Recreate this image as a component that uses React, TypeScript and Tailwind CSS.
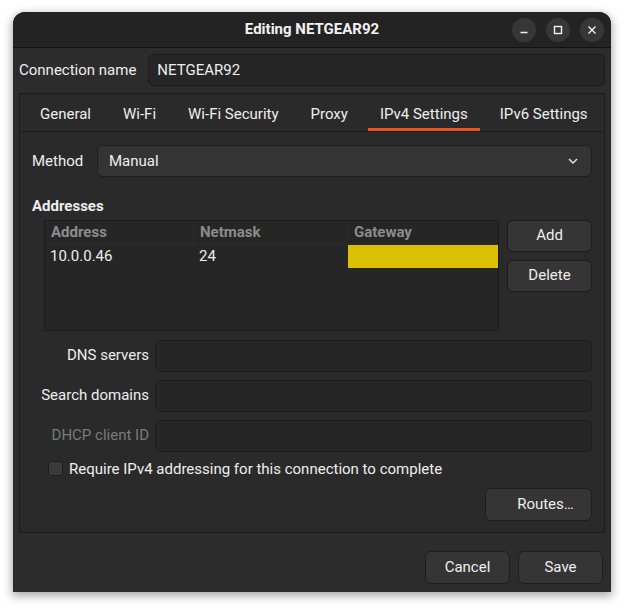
import type { ReactNode } from 'react';

const font = { fontFamily: 'Roboto, "Noto Sans", sans-serif' };

const tabs = ['General', 'Wi-Fi', 'Wi-Fi Security', 'Proxy', 'IPv4 Settings', 'IPv6 Settings'];

function WinButton({ children }: { children: ReactNode }) {
  return (
    <div className="w-[24px] h-[24px] rounded-full bg-[#373737] flex items-center justify-center">
      <svg width="16" height="16" viewBox="0 0 16 16" fill="none" stroke="#f2f2f2" strokeWidth="1.4">
        {children}
      </svg>
    </div>
  );
}

function Button({ label, className = '' }: { label: string; className?: string }) {
  return (
    <div
      className={`flex items-center justify-center rounded-[6px] bg-[#353535] border border-[#1e1e1e] text-[15px] text-[#eeeeee] ${className}`}
    >
      {label}
    </div>
  );
}

function Entry({ value = '', className = '' }: { value?: string; className?: string }) {
  return (
    <div
      className={`flex items-center h-[32px] rounded-[6px] bg-[#262626] border border-[#1c1c1c] px-[8px] text-[15px] text-[#eeeeee] ${className}`}
    >
      {value}
    </div>
  );
}

function FieldRow({ label, dim = false }: { label: string; dim?: boolean }) {
  return (
    <div className="flex items-center gap-[6px]">
      <div className={`w-[117px] text-right text-[15px] ${dim ? 'text-[#7a7a7a]' : 'text-[#eeeeee]'}`}>{label}</div>
      <Entry className="flex-1" />
    </div>
  );
}

export default function App() {
  return (
    <div className="w-[624px] h-[608px] bg-white pt-[12px] pl-[13px]" style={font}>
      <div className="w-[598px] h-[580px] rounded-t-[12px] bg-[#2c2c2c] flex flex-col overflow-hidden shadow-[0_3px_10px_1px_rgba(0,0,0,0.35)]">
        {/* Header bar */}
        <div className="relative h-[36px] shrink-0 bg-[#232323] border-b border-[#121212] flex items-center justify-center">
          <span className="text-[15px] font-bold text-[#f2f2f2]">Editing NETGEAR92</span>
          <div className="absolute right-[7px] top-[6px] flex gap-[10px]">
            <WinButton>
              <path d="M4.5 10.5h7" />
            </WinButton>
            <WinButton>
              <rect x="4.5" y="4.5" width="7" height="7" />
            </WinButton>
            <WinButton>
              <path d="M4.5 4.5l7 7M11.5 4.5l-7 7" />
            </WinButton>
          </div>
        </div>

        <div className="flex flex-col px-[6px] pt-[6px]">
          {/* Connection name */}
          <div className="flex items-center gap-[12px]">
            <span className="text-[15px] text-[#eeeeee]">Connection name</span>
            <Entry value="NETGEAR92" className="flex-1" />
          </div>

          {/* Notebook */}
          <div className="mt-[7px] h-[440px] border border-[#1b1b1b] bg-[#2a2a2a] flex flex-col">
            <div className="h-[38px] shrink-0 border-b border-[#1b1b1b] flex pl-[4px]">
              {tabs.map((t) => (
                <div
                  key={t}
                  className="relative flex items-center justify-center pt-[3px] px-[16px] text-[15px] text-[#eeeeee] whitespace-nowrap"
                >
                  {t}
                  {t === 'IPv4 Settings' && (
                    <div className="absolute left-[4px] right-[4px] bottom-0 h-[3px] bg-[#e95420]" />
                  )}
                </div>
              ))}
            </div>

            <div className="flex flex-col pl-[12px] pr-[12px] pt-[13px]">
              {/* Method */}
              <div className="flex items-center gap-[12px]">
                <span className="text-[15px] text-[#eeeeee] w-[53px]">Method</span>
                <div className="flex-1 h-[32px] rounded-[6px] bg-[#343434] border border-[#1e1e1e] flex items-center justify-between pl-[11px] pr-[12px] text-[15px] text-[#eeeeee]">
                  Manual
                  <svg width="12" height="8" viewBox="0 0 12 8" fill="none" stroke="#e6e6e6" strokeWidth="1.4">
                    <path d="M2 2l4 4 4-4" />
                  </svg>
                </div>
              </div>

              <div className="mt-[18px] text-[15px] font-bold text-[#eeeeee]">Addresses</div>

              {/* Addresses table + buttons */}
              <div className="mt-[2px] flex gap-[8px] pl-[12px]">
                <div className="w-[455px] h-[111px] bg-[#262626] border border-[#1b1b1b] flex flex-col">
                  <div className="h-[24px] flex text-[15px] font-bold text-[#8c8c8c] border-b border-[#2c2c2c]">
                    <div className="w-[149px] border-r border-[#2c2c2c] flex items-center pl-[6px]">Address</div>
                    <div className="w-[154px] border-r border-[#2c2c2c] flex items-center pl-[6px]">Netmask</div>
                    <div className="flex-1 flex items-center pl-[6px]">Gateway</div>
                  </div>
                  <div className="h-[23px] flex text-[15px] text-[#eeeeee]">
                    <div className="w-[149px] flex items-center pl-[5px]">10.0.0.46</div>
                    <div className="w-[154px] flex items-center pl-[5px]">24</div>
                    <div className="flex-1 bg-[#dcc100]" />
                  </div>
                </div>
                <div className="flex-1 flex flex-col gap-[8px]">
                  <Button label="Add" className="h-[32px]" />
                  <Button label="Delete" className="h-[32px]" />
                </div>
              </div>

              {/* Fields */}
              <div className="mt-[9px] flex flex-col gap-[8px]">
                <FieldRow label="DNS servers" />
                <FieldRow label="Search domains" />
                <FieldRow label="DHCP client ID" dim />
              </div>

              <div className="mt-[6px] flex items-center gap-[6px] pl-[16px]">
                <div className="w-[15px] h-[15px] rounded-[3px] bg-[#3a3a3a] border border-[#1e1e1e]" />
                <span className="text-[15px] text-[#eeeeee]">Require IPv4 addressing for this connection to complete</span>
              </div>

              <div className="mt-[8px] flex justify-end">
                <Button label="Routes…" className="w-[107px] h-[33px] pl-[14px]" />
              </div>
            </div>
          </div>
        </div>

        {/* Footer */}
        <div className="mt-auto flex justify-end gap-[8px] pr-[8px] pb-[8px]">
          <Button label="Cancel" className="w-[85px] h-[33px]" />
          <Button label="Save" className="w-[85px] h-[33px]" />
        </div>
      </div>
    </div>
  );
}
